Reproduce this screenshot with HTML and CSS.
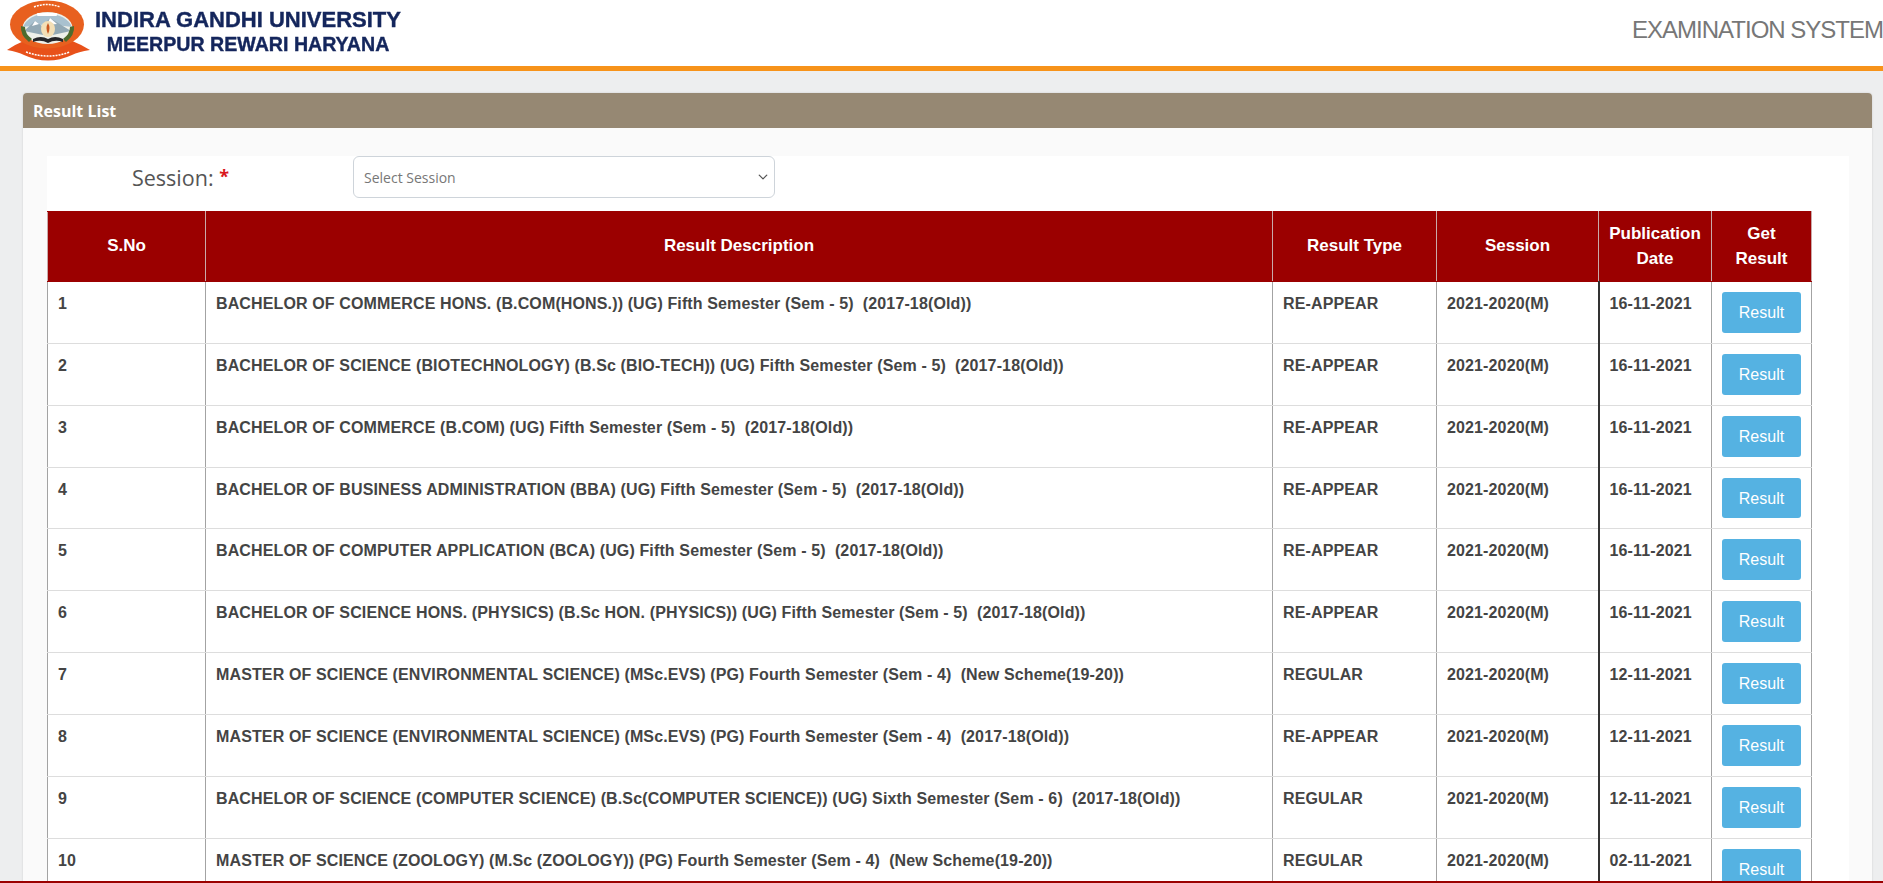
FILE: index.html
```html
<!DOCTYPE html>
<html>
    <head>
        <title>Result List</title>
        <link rel="stylesheet" href="styles.css">
    </head>
    <body>
        <header class="topbar">
            <div class="brand">
                <svg class="emblem" width="84" height="62" viewBox="0 0 84 62">
                    <path d="M1 50 Q10 44 20 40 L64 40 Q74 44 84 50 Q72 52 66 55 Q42 66 18 55 Q12 52 1 50 Z" fill="#e8511a"/>
                    <ellipse cx="41" cy="24.500" rx="37" ry="24" fill="#e8601f"/>
                    <ellipse cx="41.500" cy="28" rx="25" ry="16" fill="#eef0ea"/>
                    <path d="M17 27 Q22 15 41 13 Q61 15 66 27 L42 24 Z" fill="#a9c1cf"/>
                    <path d="M18 31 L29 21 L36 26 L44 18 L65 31 L42 36 Z" fill="#93a9b5"/>
                    <path d="M29 21 L26 26 L33 24 Z M44 18 L41 25 L51 24 Z" fill="#fff"/>
                    <rect x="31" y="13" width="20" height="3" rx="1" fill="#fff"/>
                    <ellipse cx="42" cy="29" rx="7" ry="8" fill="#f3dfb6"/>
                    <path d="M42 23 Q39 28 42 34 Q45 28 42 23 Z" fill="#c9561f"/>
                    <path d="M27 39 Q35 35 42 39 Q49 35 57 39 L57 42 Q49 39 42 43 Q35 39 27 42 Z" fill="#26262a"/>
                    <path d="M15 26 Q14 35 23 42 L26 39 Q19 34 19 27 Z M68 26 Q69 35 60 42 L57 39 Q64 34 64 27 Z" fill="#4d6b2e"/>
                    <path d="M28 7 Q41 2 54 7" fill="none" stroke="#fff" stroke-width="1.500" stroke-dasharray="2 1"/>
                    <path d="M20 52 Q42 60 64 52" fill="none" stroke="#fff" stroke-width="1.500" stroke-dasharray="2 1"/>
                </svg>
                <div class="brand-text">
                    <div class="brand-line1">INDIRA GANDHI UNIVERSITY</div>
                    <div class="brand-line2">MEERPUR REWARI HARYANA</div>
                </div>
            </div>
            <div class="system-name">EXAMINATION SYSTEM</div>
        </header>

        <main class="content">
            <section class="panel">
                <div class="panel-heading">Result List</div>
                <div class="panel-body">
                    <div class="inner">
                        <div class="filter-row">
                            <label class="filter-label">Session: <span class="required">*</span></label>
                            <div class="select-wrap">
                                <select class="session-select">
                                    <option>Select Session</option>
                                </select>
                                <svg class="chevron" width="10" height="10" viewBox="0 0 16 16">
                                    <path d="M2 5l6 6 6-6" fill="none" stroke="#555" stroke-width="2" stroke-linecap="round" stroke-linejoin="round"/>
                                </svg>
                            </div>
                        </div>

                        <table class="results">
                            <thead>
                                <tr>
                                    <th class="col-no">S.No</th>
                                    <th class="col-desc">Result Description</th>
                                    <th class="col-type">Result Type</th>
                                    <th class="col-session">Session</th>
                                    <th class="col-date">Publication Date</th>
                                    <th class="col-get">Get Result</th>
                                </tr>
                            </thead>
                            <tbody>
                                <tr><td>1</td><td>BACHELOR OF COMMERCE HONS. (B.COM(HONS.)) (UG) Fifth Semester (Sem - 5)&nbsp; (2017-18(Old))</td><td>RE-APPEAR</td><td>2021-2020(M)</td><td class="date">16-11-2021</td><td><a class="btn">Result</a></td></tr>
                                <tr><td>2</td><td>BACHELOR OF SCIENCE (BIOTECHNOLOGY) (B.Sc (BIO-TECH)) (UG) Fifth Semester (Sem - 5)&nbsp; (2017-18(Old))</td><td>RE-APPEAR</td><td>2021-2020(M)</td><td class="date">16-11-2021</td><td><a class="btn">Result</a></td></tr>
                                <tr><td>3</td><td>BACHELOR OF COMMERCE (B.COM) (UG) Fifth Semester (Sem - 5)&nbsp; (2017-18(Old))</td><td>RE-APPEAR</td><td>2021-2020(M)</td><td class="date">16-11-2021</td><td><a class="btn">Result</a></td></tr>
                                <tr><td>4</td><td>BACHELOR OF BUSINESS ADMINISTRATION (BBA) (UG) Fifth Semester (Sem - 5)&nbsp; (2017-18(Old))</td><td>RE-APPEAR</td><td>2021-2020(M)</td><td class="date">16-11-2021</td><td><a class="btn">Result</a></td></tr>
                                <tr><td>5</td><td>BACHELOR OF COMPUTER APPLICATION (BCA) (UG) Fifth Semester (Sem - 5)&nbsp; (2017-18(Old))</td><td>RE-APPEAR</td><td>2021-2020(M)</td><td class="date">16-11-2021</td><td><a class="btn">Result</a></td></tr>
                                <tr><td>6</td><td>BACHELOR OF SCIENCE HONS. (PHYSICS) (B.Sc HON. (PHYSICS)) (UG) Fifth Semester (Sem - 5)&nbsp; (2017-18(Old))</td><td>RE-APPEAR</td><td>2021-2020(M)</td><td class="date">16-11-2021</td><td><a class="btn">Result</a></td></tr>
                                <tr><td>7</td><td>MASTER OF SCIENCE (ENVIRONMENTAL SCIENCE) (MSc.EVS) (PG) Fourth Semester (Sem - 4)&nbsp; (New Scheme(19-20))</td><td>REGULAR</td><td>2021-2020(M)</td><td class="date">12-11-2021</td><td><a class="btn">Result</a></td></tr>
                                <tr><td>8</td><td>MASTER OF SCIENCE (ENVIRONMENTAL SCIENCE) (MSc.EVS) (PG) Fourth Semester (Sem - 4)&nbsp; (2017-18(Old))</td><td>RE-APPEAR</td><td>2021-2020(M)</td><td class="date">12-11-2021</td><td><a class="btn">Result</a></td></tr>
                                <tr><td>9</td><td>BACHELOR OF SCIENCE (COMPUTER SCIENCE) (B.Sc(COMPUTER SCIENCE)) (UG) Sixth Semester (Sem - 6)&nbsp; (2017-18(Old))</td><td>REGULAR</td><td>2021-2020(M)</td><td class="date">12-11-2021</td><td><a class="btn">Result</a></td></tr>
                                <tr><td>10</td><td>MASTER OF SCIENCE (ZOOLOGY) (M.Sc (ZOOLOGY)) (PG) Fourth Semester (Sem - 4)&nbsp; (New Scheme(19-20))</td><td>REGULAR</td><td>2021-2020(M)</td><td class="date">02-11-2021</td><td><a class="btn">Result</a></td></tr>
                            </tbody>
                        </table>
                    </div>
                </div>
            </section>
        </main>

        <div class="footer-line"></div>
    </body>
</html>
```

FILE: styles.css
```css
html, body {
    height: 100%;
    overflow: hidden;
}

body {
    margin: 0;
    background: #edeeef;
    font-family: "Liberation Sans", Arial, sans-serif;
}

.topbar {
    display: flex;
    align-items: flex-start;
    justify-content: space-between;
    height: 66px;
    background: #fff;
    border-bottom: 5px solid #f7931a;
}

.brand {
    display: flex;
    flex-shrink: 0;
    padding-left: 6px;
}

.emblem {
    display: block;
}

.brand-text {
    padding: 8px 0 0 5px;
    color: #14265c;
    font-weight: bold;
    text-align: center;
    filter: blur(0.4px);
}

.brand-line1 {
    font-size: 22px;
    line-height: 24px;
    -webkit-text-stroke: 0.4px #14265c;
}

.brand-line2 {
    font-size: 19.6px;
    line-height: 25px;
    -webkit-text-stroke: 0.4px #14265c;
}

.system-name {
    flex-shrink: 0;
    margin: 15px 0 0 0;
    color: #777;
    font-size: 24px;
    letter-spacing: -1px;
    line-height: 30px;
    white-space: nowrap;
}

.content {
    padding: 22px 11px 0 23px;
}

.panel {
    background: #fafafa;
    border-radius: 4px 4px 0 0;
    box-shadow: 0 0 2px rgba(0, 0, 0, 0.15);
}

.panel-heading {
    height: 35px;
    padding-left: 10px;
    background: #968873;
    border-radius: 4px 4px 0 0;
    color: #fff;
    font-family: "Open Sans", sans-serif;
    font-size: 16px;
    font-weight: bold;
    line-height: 36px;
}

.panel-body {
    padding: 28px 23px 0 24px;
}

.inner {
    background: #fff;
}

.filter-row {
    display: flex;
    align-items: center;
    height: 42px;
    margin-bottom: 13px;
}

.filter-label {
    width: 306px;
    padding-left: 85px;
    box-sizing: border-box;
    color: #555;
    font-family: "Open Sans", sans-serif;
    font-size: 21.5px;
}

.required {
    color: #d9161c;
    font-size: 18px;
    font-weight: bold;
    vertical-align: 3px;
}

.select-wrap {
    position: relative;
    width: 422px;
    height: 42px;
}

.session-select {
    width: 100%;
    height: 100%;
    padding: 0 10px;
    appearance: none;
    background: #fff;
    border: 1px solid #ced4da;
    border-radius: 6px;
    color: #777;
    font-family: "Open Sans", sans-serif;
    font-size: 14px;
}

.chevron {
    position: absolute;
    top: 16px;
    right: 7px;
}

.results {
    width: 1764px;
    table-layout: fixed;
    border-collapse: collapse;
}

.results th {
    height: 70px;
    padding: 0 10px 2px;
    box-sizing: border-box;
    background: #9b0000;
    border: 1px solid #c9a9a9;
    border-top-color: #9b0000;
    border-bottom-color: #9b0000;
    color: #fff;
    font-size: 17px;
    line-height: 25px;
    text-align: center;
}

.col-no { width: 158px; }
.col-desc { width: 1067px; }
.col-type { width: 164px; }
.col-session { width: 162px; }
.col-date { width: 113px; }
.col-get { width: 100px; }

.results td {
    height: 61.86px;
    padding: 11px 10px 10px;
    box-sizing: border-box;
    background: #fff;
    border: 1px solid #a3a3a3;
    border-top-color: #ddd;
    border-bottom-color: #ddd;
    color: #444;
    font-size: 16px;
    font-weight: bold;
    letter-spacing: 0.13px;
    line-height: 22.86px;
    vertical-align: top;
}

.results td.date {
    border-left: 2px solid #333;
}

.btn {
    display: block;
    width: 79px;
    height: 40.86px;
    margin-top: -1px;
    background: #55b2e2;
    border-radius: 3px;
    color: #fff;
    font-size: 16px;
    font-weight: normal;
    letter-spacing: 0;
    line-height: 41px;
    text-align: center;
}

.footer-line {
    position: fixed;
    left: 0;
    right: 0;
    bottom: 0;
    height: 2px;
    background: #9b0000;
}
```
